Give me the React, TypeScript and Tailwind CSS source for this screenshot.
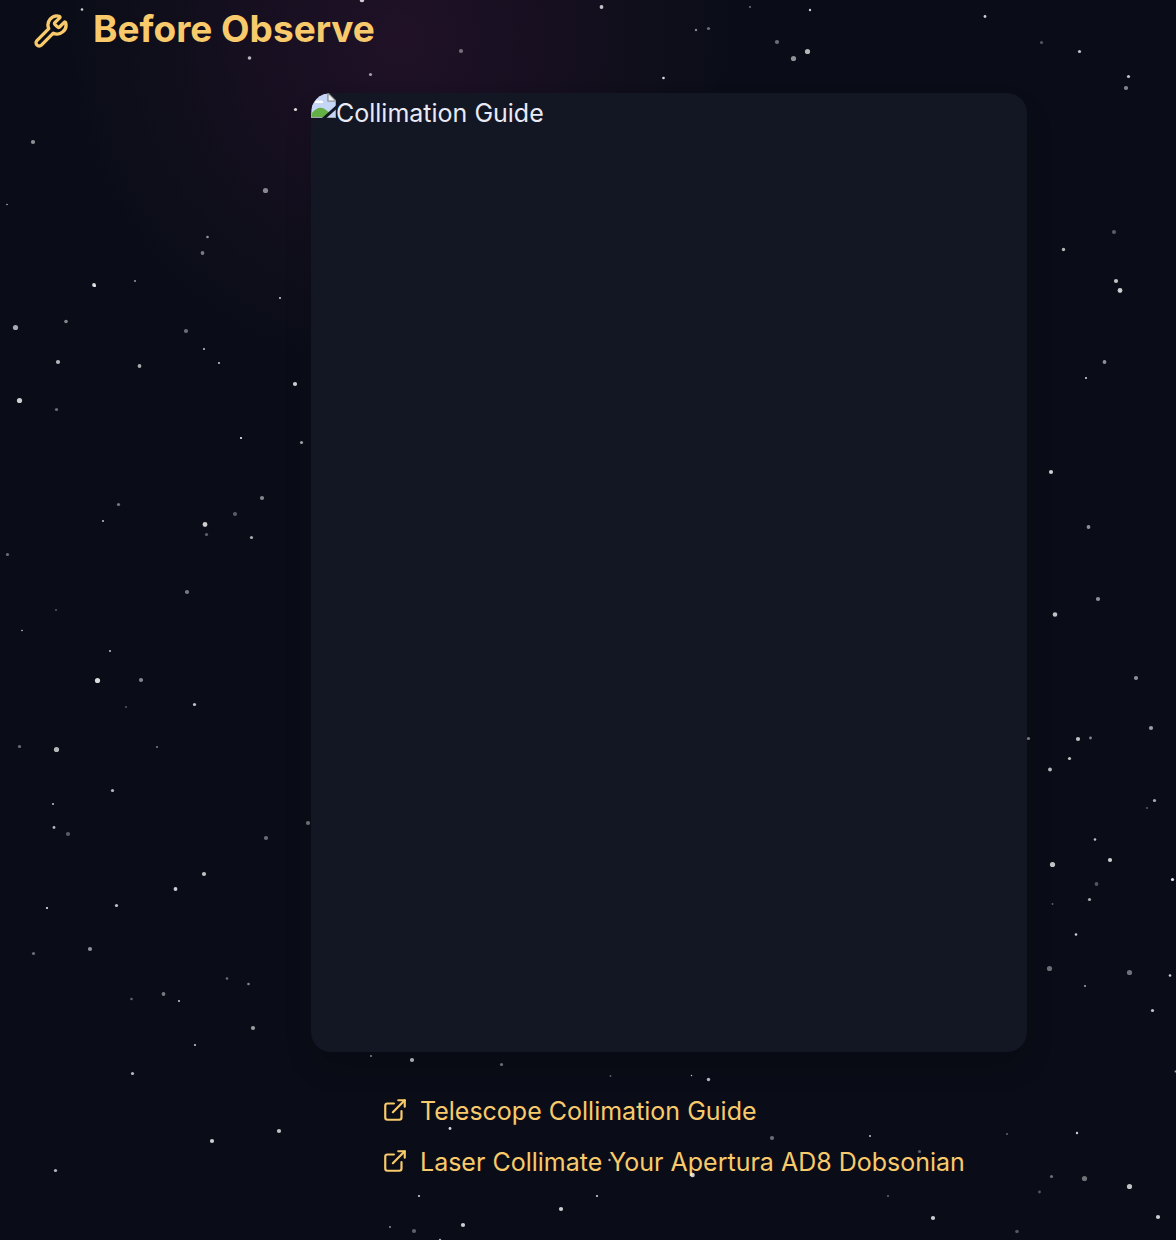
import { ExternalLink, Wrench } from "lucide-react";

// x, y, radius, opacity
const STARS: [number, number, number, number][] = [
  [82, 9.5, 1.3, 0.8], [362, 0, 2.3, 0.8], [249.5, 58, 1.8, 0.7], [370.5, 74.5, 1.6, 0.6], [461, 51, 2.1, 0.4],
  [601.5, 7, 1.9, 0.75], [696, 30, 1.2, 0.5], [708.5, 28.5, 1.6, 0.4], [750, 7, 1.1, 0.4], [810, 10, 1.2, 0.8],
  [777, 42, 2.1, 0.4], [793.5, 58.5, 2.6, 0.55], [807.5, 51.5, 2.6, 0.7], [663.5, 78, 1.3, 0.85], [985, 16.5, 1.4, 0.8],
  [1041.5, 42.5, 1.6, 0.3], [1079.5, 51.5, 1.6, 0.75], [1128.5, 76.5, 1.6, 0.75], [1126, 88, 2.1, 0.5], [1114, 232, 2.1, 0.33],
  [1063.5, 249.5, 1.7, 0.7], [1116, 281, 2.1, 0.75], [1120, 290.5, 2.4, 0.8], [1104.5, 362, 1.9, 0.55], [1086, 378, 1.1, 0.8],
  [1051, 472, 2.1, 0.8], [1088.5, 527, 1.9, 0.55], [295.5, 109.5, 1.6, 0.85], [33, 142, 2.1, 0.55], [265.5, 190.5, 2.6, 0.5],
  [7, 204.5, 0.8, 0.7], [207.5, 237, 1.3, 0.55], [202.5, 253, 1.9, 0.45], [94, 285, 1.9, 0.85], [95, 286, 1, 0.85],
  [135, 281, 1.1, 0.55], [280, 298, 1.1, 0.75], [15.5, 327.5, 2.6, 0.65], [66, 321.5, 1.8, 0.5], [186, 331, 2.1, 0.4],
  [204, 349, 1.1, 0.7], [219, 363, 1.1, 0.75], [58, 362, 2.1, 0.7], [139.5, 366, 1.9, 0.65], [295, 384, 2.1, 0.8],
  [19.5, 400.5, 2.6, 0.8], [56.5, 409.5, 1.6, 0.4], [241, 438, 1.1, 0.95], [301.5, 442.5, 1.6, 0.6], [262, 498, 2.1, 0.5],
  [118.5, 504.5, 1.6, 0.45], [103, 521, 1.1, 0.7], [235, 514, 2.1, 0.33], [205, 524.5, 2.4, 0.8], [206.5, 534.5, 1.6, 0.35],
  [251.5, 537.5, 1.6, 0.65], [7.5, 554.5, 1.6, 0.4], [187, 592, 2.1, 0.45], [56, 610, 1.1, 0.3], [22, 630.5, 0.8, 0.8],
  [110, 651, 1.1, 0.7], [97.5, 680.5, 2.6, 0.85], [141, 680, 2.1, 0.5], [194.5, 704.5, 1.6, 0.75], [126, 707, 1.1, 0.3],
  [19.5, 746.5, 1.6, 0.4], [56.5, 749.5, 2.6, 0.7], [157, 747, 1.1, 0.45], [112.5, 790.5, 1.6, 0.7], [53, 804, 1.1, 0.7],
  [54, 827.5, 1.4, 0.7], [68, 834, 2.1, 0.33], [308, 823, 2.1, 0.4], [266, 838, 2.1, 0.4], [204, 874, 2.1, 0.75],
  [175.5, 889, 1.9, 0.8], [116.5, 905.5, 1.6, 0.75], [47, 908, 1.1, 0.9], [33.5, 953.5, 1.6, 0.4], [90, 949, 2.1, 0.55],
  [227, 978.5, 1.3, 0.4], [248.5, 984, 1.3, 0.5], [163.5, 994, 1.9, 0.45], [131.5, 999, 1.3, 0.35], [179, 1001, 1.1, 0.75],
  [253, 1028, 2.1, 0.6], [195, 1045, 1.1, 0.75], [132.5, 1073.5, 1.6, 0.7], [279, 1131, 2.1, 0.75], [212, 1141, 2.1, 0.8],
  [55.5, 1170.5, 1.6, 0.7], [1098, 599, 2.1, 0.55], [1055, 614.5, 2.3, 0.75], [1136, 678, 2.1, 0.55], [1151, 728, 2.1, 0.6],
  [1028.5, 738.5, 1.6, 0.45], [1078, 739, 2.1, 0.75], [1090.5, 738, 1.4, 0.5], [1069.5, 758.5, 1.6, 0.75], [1050, 769.5, 1.9, 0.7],
  [1154.5, 800.5, 1.6, 0.65], [1147, 808, 1.1, 0.3], [1095, 839.5, 1.3, 0.75], [1110, 860, 2.1, 0.8], [1052.5, 864.5, 2.6, 0.75],
  [1096.5, 884, 1.9, 0.3], [1172.5, 879.5, 1.6, 0.9], [1089.5, 899.5, 1.6, 0.65], [1052.5, 904, 0.9, 0.35], [1076, 934.5, 1.3, 0.8],
  [1049.5, 968.5, 2.6, 0.4], [1129.5, 972.5, 2.6, 0.42], [1170, 975.5, 1.3, 0.8], [1085, 986, 1.1, 0.6], [1152.5, 1010.5, 1.6, 0.75],
  [1175.5, 1071.5, 1, 0.6], [1077, 1133, 1.2, 0.8], [1051.5, 1176.5, 1.6, 0.4], [1084.5, 1178.5, 2.6, 0.42], [1129.5, 1186.5, 2.6, 0.75],
  [1039.5, 1192, 1.4, 0.3], [1158, 1217, 2.1, 0.8], [1017, 1231.5, 1.8, 0.3], [371, 1056, 1.1, 0.45], [412, 1060, 2.1, 0.65],
  [501.5, 1064.5, 1.6, 0.4], [610.5, 1076, 0.9, 0.35], [691.5, 1075.5, 0.7, 0.8], [708.5, 1079.5, 1.7, 0.7], [450, 1128.5, 1.4, 0.85],
  [772, 1138, 2.1, 0.4], [870, 1136, 1.1, 0.7], [1007, 1134, 1.1, 0.35], [919.5, 1151.5, 1.6, 0.35], [542, 1155, 1.1, 0.35],
  [609.5, 1160, 1.2, 0.7], [692.5, 1175, 2.3, 0.8], [419, 1196, 1.1, 0.8], [597, 1196, 1.1, 0.8], [888, 1196, 1.1, 0.35],
  [561, 1209, 2.1, 0.8], [933, 1218, 2.1, 0.8], [463, 1225, 2.1, 0.8], [390, 1227, 1.1, 0.5], [414, 1231, 2.1, 0.35],
  [440, 1240, 1.2, 0.7],
];

const LINKS = ["Telescope Collimation Guide", "Laser Collimate Your Apertura AD8 Dobsonian"];

function StarField() {
  return (
    <svg aria-hidden="true" className="pointer-events-none absolute inset-0 h-full w-full">
      {STARS.map(([x, y, r, o]) => (
        <circle key={`${x}-${y}`} cx={x} cy={y} r={r} fill="#fff" opacity={o} />
      ))}
    </svg>
  );
}

function BrokenImageIcon() {
  return (
    <svg aria-hidden="true" viewBox="0 0 25 25" className="size-[25px] shrink-0">
      <path d="M0 0h17l8 8v17H0z" fill="#a3a6ac" />
      <path d="M1 1h15.500v7.500H24V24H1z" fill="#c6d6f7" />
      <path d="M4 9.500c0-2 3-3 4.500-1.500 2-1 4 0 3.500 2H4z" fill="#fff" />
      <path d="M1 24v-4c4-5 9-7 14-3l4 3-3 4z" fill="#65b045" />
      <path d="M17 0v8h8z" fill="#f4f4f5" stroke="#8d9096" strokeWidth="1.200" />
      <path d="M25 12.500v4L15.500 25H11z" fill="#131623" />
    </svg>
  );
}

export default function App() {
  return (
    <main className="relative min-h-screen overflow-hidden bg-[#0a0d17] bg-[radial-gradient(circle_at_400px_38px,#201127_0px,#0a0d17_330px)] pb-14 font-['Inter',sans-serif]">
      <header className="flex items-center gap-6 px-[33px] pt-[5px]">
        <Wrench className="mt-1 size-9 text-[#f9ca6b]" strokeWidth={2.2} aria-hidden="true" />
        <h1 className="text-[37px] leading-[48px] font-bold text-[#f9ca6b]">Before Observe</h1>
      </header>
      <section className="mt-10 flex flex-col items-center pl-[162px]">
        <div
          role="img"
          aria-label="Collimation Guide"
          className="flex aspect-[716/959] w-full max-w-[716px] items-start overflow-hidden rounded-[20px] bg-[#131623] shadow-[0_16px_30px_-4px_rgba(0,0,0,0.2)]"
        >
          <BrokenImageIcon />
          <span className="text-[25px] leading-10 text-[#e8eaf6]">Collimation Guide</span>
        </div>
        <ul className="mt-10 flex w-full max-w-[574px] flex-col gap-3">
          {LINKS.map((label) => (
            <li key={label}>
              <a href="#" className="flex items-center gap-3 text-[25px] leading-[39px] whitespace-nowrap text-[#f9ca6b]">
                <ExternalLink className="mb-1 size-[26px] shrink-0" strokeWidth={2} aria-hidden="true" />
                {label}
              </a>
            </li>
          ))}
        </ul>
      </section>
      <StarField />
    </main>
  );
}
